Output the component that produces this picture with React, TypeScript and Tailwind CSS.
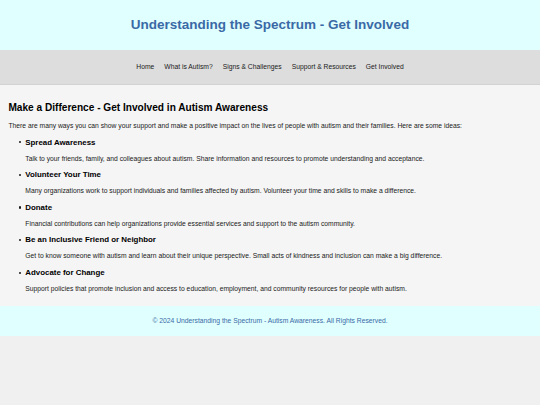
const items = [
  {
    title: 'Spread Awareness',
    text: 'Talk to your friends, family, and colleagues about autism. Share information and resources to promote understanding and acceptance.',
  },
  {
    title: 'Volunteer Your Time',
    text: 'Many organizations work to support individuals and families affected by autism. Volunteer your time and skills to make a difference.',
  },
  {
    title: 'Donate',
    text: 'Financial contributions can help organizations provide essential services and support to the autism community.',
  },
  {
    title: 'Be an Inclusive Friend or Neighbor',
    text: 'Get to know someone with autism and learn about their unique perspective. Small acts of kindness and inclusion can make a big difference.',
  },
  {
    title: 'Advocate for Change',
    text: 'Support policies that promote inclusion and access to education, employment, and community resources for people with autism.',
  },
];

const links = ['Home', 'What is Autism?', 'Signs & Challenges', 'Support & Resources', 'Get Involved'];

export default function App() {
  return (
    <div className="min-h-[405px] bg-[#f0f0f0] font-['Liberation_Sans',Arial,sans-serif] text-[6.75px] leading-[1.15] text-[#1a1a1a]">
      {/* Header */}
      <header className="bg-[#e0ffff] py-[8.4px] text-center">
        <h1 className="my-[9px] text-[13.5px] font-bold text-[#3a6aa6]">
          Understanding the Spectrum - Get Involved
        </h1>
      </header>

      {/* Nav */}
      <nav className="bg-[#dddddd] py-[6.3px] border-b border-[#d2d2d2]">
        <ul className="my-[6.75px] flex justify-center gap-[10px]">
          {links.map(l => (
            <li key={l}>
              <a href="#" className="text-[#1a1a1a]">{l}</a>
            </li>
          ))}
        </ul>
      </nav>

      {/* Main */}
      <main className="bg-[#f5f5f5] px-[8.4px] pt-[8.4px] pb-[6.6px] flow-root">
        <h2 className="my-[8.4px] text-[10.125px] font-bold text-black">
          Make a Difference - Get Involved in Autism Awareness
        </h2>
        <p className="my-[6.75px]">
          There are many ways you can show your support and make a positive impact on the lives of people with autism and their families. Here are some ideas:
        </p>
        <ul className="my-[6.75px] pl-[16.9px]">
          {items.map(item => (
            <li key={item.title} className="relative">
              <span className="absolute left-[-6px] top-[3.6px] h-[2.2px] w-[2.2px] rounded-full bg-[#1a1a1a]" />
              <h3 className="my-[7.9px] text-[7.9px] font-bold text-black">{item.title}</h3>
              <p className="my-[6.75px]">{item.text}</p>
            </li>
          ))}
        </ul>
      </main>

      {/* Footer */}
      <footer className="bg-[#e0ffff] py-[4.2px] text-center flow-root">
        <p className="my-[6.75px] text-[#3a6aa6]">
          © 2024 Understanding the Spectrum - Autism Awareness. All Rights Reserved.
        </p>
      </footer>
    </div>
  );
}
